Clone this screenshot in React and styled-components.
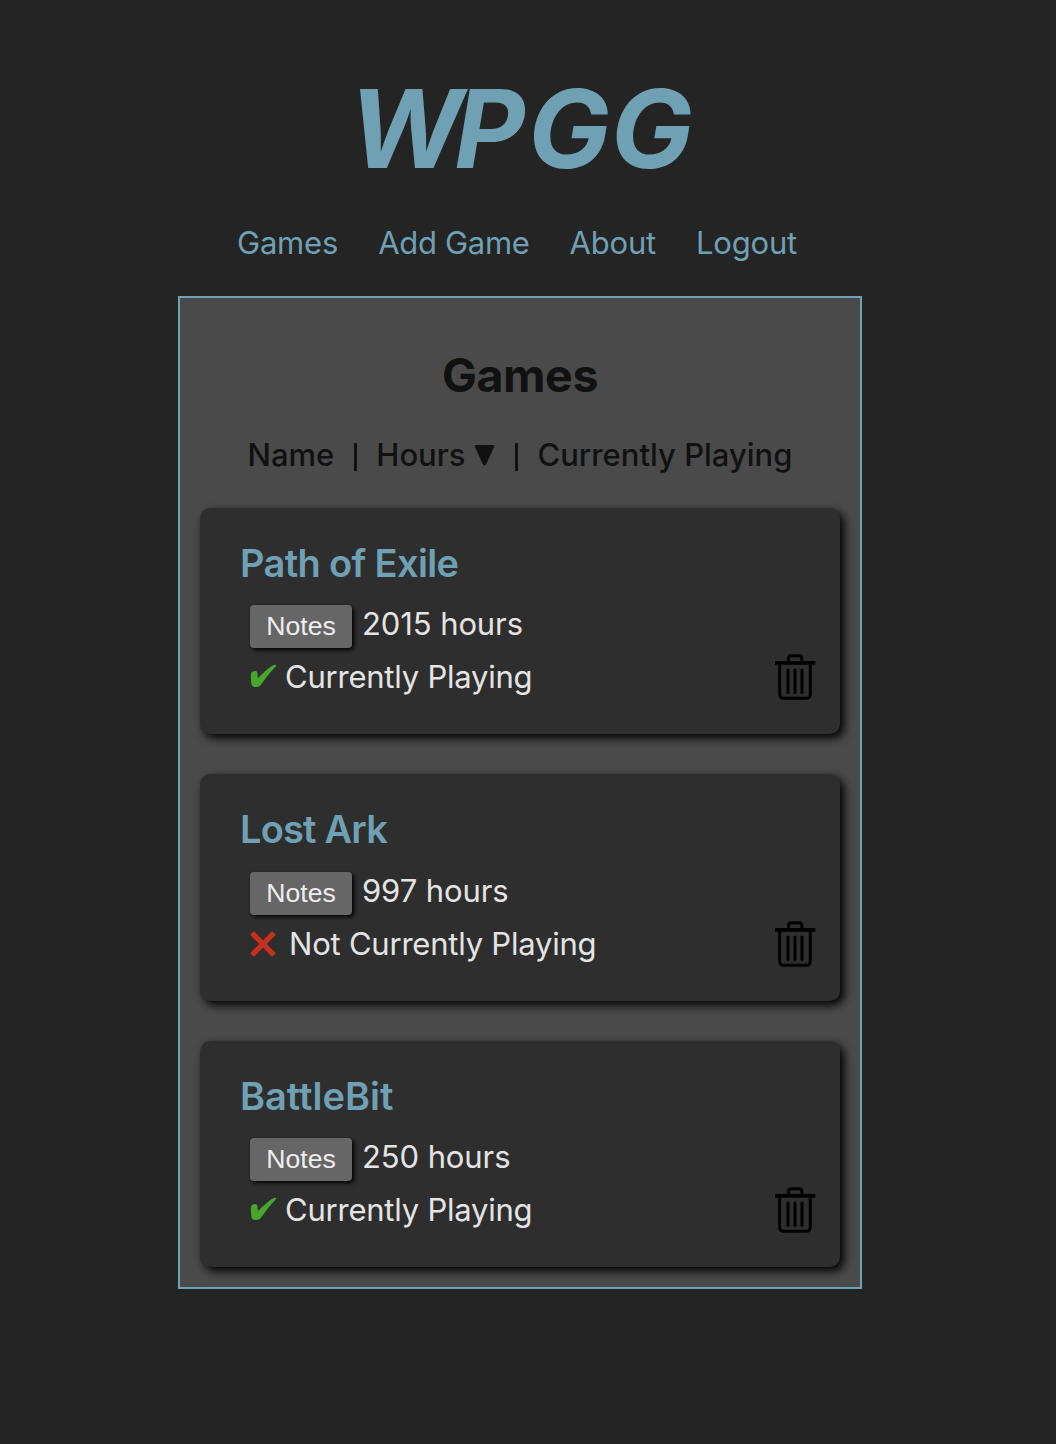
import React from "react";
import styled, { createGlobalStyle } from "styled-components";

const accent = "#70a0b4";

const GlobalStyle = createGlobalStyle`
  * { box-sizing: border-box; }
  body {
    margin: 0;
    background: #242424;
    color: #e4e4e4;
    font-family: Inter, "Liberation Sans", sans-serif;
    font-size: 31px;
  }
`;

const Page = styled.div`
  width: 1040px;
  min-height: 1444px;
  padding-top: 64px;
  display: flex;
  flex-direction: column;
  align-items: center;
`;

const Logo = styled.h1`
  margin: 0;
  padding-left: 3px;
  height: 128px;
  font-size: 109px;
  line-height: 128px;
  font-style: italic;
  font-weight: 700;
  letter-spacing: 1px;
  color: ${accent};
`;

const Kern = styled.span`
  letter-spacing: ${(p) => p.$track}px;
`;

const Nav = styled.nav`
  display: flex;
  gap: 40px;
  margin-top: 27px;
  height: 77px;
  padding-right: 6px;
  line-height: 48px;
`;

const NavLink = styled.a`
  color: ${accent};
  letter-spacing: ${(p) => p.$track || -0.2}px;
  white-space: nowrap;
`;

const Panel = styled.main`
  width: 684px;
  height: 993px;
  border: 2px solid ${accent};
  background: #4a4a4a;
  padding: 49px 20px 20px;
`;

const Heading = styled.h2`
  margin: 0;
  text-align: center;
  font-size: 46.5px;
  line-height: 56px;
  font-weight: 700;
  letter-spacing: -0.4px;
  color: #111;
`;

const SortBar = styled.div`
  display: flex;
  justify-content: center;
  align-items: center;
  gap: 19.5px;
  margin: 28px 0 28.8px;
  height: 48px;
  line-height: 48px;
  font-weight: 500;
  color: #111;
  white-space: nowrap;
`;

const SortOption = styled.span`
  display: flex;
  align-items: center;
  gap: 9px;

  svg {
    margin-bottom: 1px;
  }
`;

const Divider = styled.span`
  width: 3px;
  height: 28px;
  margin-top: 3px;
  background: #111;
`;

const CardList = styled.div`
  display: flex;
  flex-direction: column;
  gap: 40px;
`;

const Card = styled.article`
  display: flex;
  justify-content: space-between;
  align-items: flex-end;
  height: 226.4px;
  padding: 31.2px 24px 34px 40px;
  border-radius: 10px;
  background: #2e2e2e;
  box-shadow: 4px 4px 10px #000;
`;

const Details = styled.div`
  height: 100%;
`;

const GameTitle = styled.h3`
  margin: 0;
  font-size: 38px;
  line-height: 48px;
  font-weight: 600;
  letter-spacing: ${(p) => p.$track}px;
  color: ${accent};
`;

const Row = styled.div`
  display: flex;
  align-items: center;
  height: 53px;
  padding-left: 10px;
  margin-top: ${(p) => p.$top || 0}px;
  white-space: nowrap;
`;

const NotesButton = styled.button`
  width: 102px;
  height: 43px;
  margin: 6px 10px 0 0;
  padding: 0;
  border: 0;
  border-radius: 4px;
  background: #666;
  color: #eee;
  font: 26.6px "Liberation Sans", Arial, sans-serif;
  box-shadow: 2px 2px 4px #000;
`;

const Label = styled.span`
  letter-spacing: ${(p) => p.$track || 0}px;
  margin-left: ${(p) => p.$left || 0}px;
`;

const DeleteButton = styled.button`
  display: flex;
  padding: 0;
  border: 0;
  background: none;
`;

const TriangleDown = () => (
  <svg width="21" height="22" viewBox="0 0 21 22">
    <path d="M2.2 1H18.8Q21 1 20 3.2L12.2 20Q10.5 23 8.8 20L1 3.2Q0 1 2.2 1Z" fill="#111" />
  </svg>
);

const Check = () => (
  <svg width="27" height="26" viewBox="0 0 27 26">
    <path d="M1 9.7C1.5 7.3 6.4 5.9 7.2 8.3C7.8 10.2 7.4 12.5 8 13.9C13 9.2 18.5 3.4 23.8 .9C25.3 .2 27 .9 25.8 2.5C20.7 7.3 15.7 14.5 10.7 21C9 23.2 4 23.9 2.3 22.1C1 20.2 .8 13.2 1 9.7Z" fill="#48a62d" />
  </svg>
);

const Cross = () => (
  <svg width="26" height="28" viewBox="0 -2 26 28">
    <path d="M2 2L24 24M24 2L2 24" stroke="#c93022" strokeWidth="5.2" />
  </svg>
);

const Trash = () => (
  <svg width="42" height="46" viewBox="0 0 42 46" fill="none" stroke="#000">
    <path d="M1 8.9H41.3" strokeWidth="3.6" />
    <path d="M14.4 8V5Q14.4 1.8 17.5 1.8H24.8Q27.9 1.8 27.9 5V8M5.7 9V40Q5.7 44.3 10 44.3H32Q36.3 44.3 36.3 40V9" strokeWidth="2.9" />
    <path d="M14 16V38.4M21 16V38.4M28 16V38.4" strokeWidth="3" strokeLinecap="round" />
  </svg>
);

const games = [
  { name: "Path of Exile", hours: 2015, playing: true, track: -0.65 },
  { name: "Lost Ark", hours: 997, playing: false, track: -0.8 },
  { name: "BattleBit", hours: 250, playing: true, track: 0 },
];

export default function App() {
  return (
    <>
      <GlobalStyle />
      <Page>
        <Logo><Kern $track={-8}>W</Kern><Kern $track={3}>P</Kern>GG</Logo>
        <Nav>
          <NavLink>Games</NavLink>
          <NavLink $track={-0.3}>Add Game</NavLink>
          <NavLink>About</NavLink>
          <NavLink>Logout</NavLink>
        </Nav>
        <Panel>
          <Heading>Games</Heading>
          <SortBar>
            <SortOption>Name</SortOption>
            <Divider />
            <SortOption>Hours<TriangleDown /></SortOption>
            <Divider />
            <SortOption>Currently Playing</SortOption>
          </SortBar>
          <CardList>
            {games.map((g) => (
              <Card key={g.name}>
                <Details>
                  <GameTitle $track={g.track}>{g.name}</GameTitle>
                  <Row $top={10.3}>
                    <NotesButton>Notes</NotesButton>
                    <Label $track={-0.1}>{g.hours} hours</Label>
                  </Row>
                  <Row>
                    {g.playing ? <Check /> : <Cross />}
                    <Label $track={-0.22} $left={g.playing ? 8 : 13}>
                      {g.playing ? "Currently Playing" : "Not Currently Playing"}
                    </Label>
                  </Row>
                </Details>
                <DeleteButton aria-label="Delete"><Trash /></DeleteButton>
              </Card>
            ))}
          </CardList>
        </Panel>
      </Page>
    </>
  );
}
